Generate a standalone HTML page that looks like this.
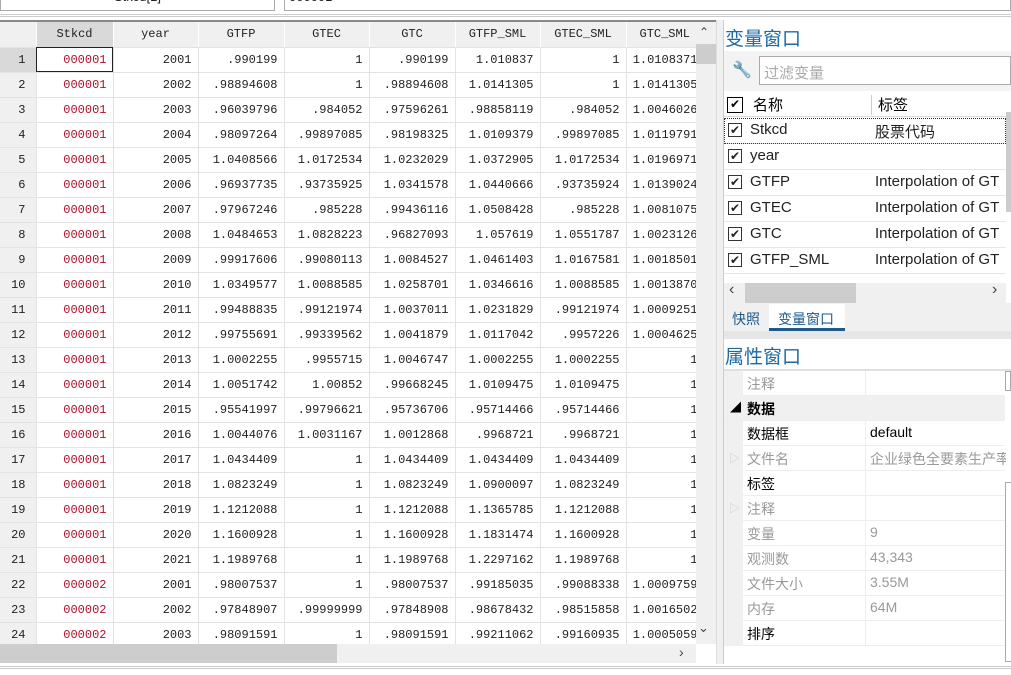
<!DOCTYPE html>
<html><head><meta charset="utf-8"><style>
*{margin:0;padding:0;box-sizing:border-box}
body{width:1011px;height:675px;overflow:hidden;background:#fff;position:relative;font-family:"Liberation Sans","Noto Sans CJK SC",sans-serif}
.a{position:absolute}
.mono{font-family:"Liberation Mono","DejaVu Sans Mono",monospace;font-size:12px;color:#222}
#grid{left:0;top:22px;width:696px;height:622px;overflow:hidden}
table{border-collapse:collapse;table-layout:fixed;width:704px}
td{height:25px;border-right:1px solid #e3e3e3;border-bottom:1px solid #e3e3e3;text-align:right;padding-right:6px;white-space:nowrap;overflow:hidden}
tr.h td{background:#f0f0f0;text-align:center;padding:0;border-right:1px solid #fff;border-bottom:1px solid #e3e3e3}
td.r{background:#f0f0f0;text-align:right;padding-right:10px;border-right:1px solid #e3e3e3}
td.s{color:#b0102a}
.vr{position:absolute;left:724px;width:282px;height:26px;border-bottom:1px solid #e6e6e6;font-size:15px;color:#222}
.cb{position:absolute;left:4px;top:5px;width:14px;height:14px;border:1px solid #333;font-size:12px;line-height:12px;text-align:center}
.pr{position:absolute;left:724px;width:281px;height:25px;border-bottom:1px solid #eee;font-size:14px}
.pr .m{position:absolute;left:0;top:0;width:19px;height:25px;background:#f0f0f0}
.pr .n{position:absolute;left:23px;top:3px}
.pr .v{position:absolute;left:146px;top:3px;white-space:nowrap;width:136px;overflow:hidden}
.pr .d{position:absolute;left:141px;top:0;width:1px;height:25px;background:#eee}
.g{color:#999}
</style></head><body>
<div class="a" style="left:0;top:-10px;width:275px;height:21px;border:1px solid #aaa;border-top:none;font-size:13px;text-align:center;color:#222;line-height:14px">Stkcd[1]</div>
<div class="a" style="left:284px;top:-10px;width:727px;height:21px;border:1px solid #aaa;border-top:none;font-size:13px;padding-left:4px;line-height:14px;color:#222">000001</div>
<div class="a" style="left:0;top:14px;width:1011px;height:3px;border-top:1px solid #ccc;border-bottom:1px solid #ccc"></div>
<div class="a" style="left:0;top:20px;width:716px;height:2px;background:#888"></div>
<div id="grid" class="a mono"><table>
<colgroup><col style="width:36px"><col style="width:77px"><col style="width:85px"><col style="width:86px"><col style="width:85px"><col style="width:86px"><col style="width:85px"><col style="width:86px"><col style="width:78px"></colgroup>
<tr class="h"><td></td><td style="background:#d9d9d9">Stkcd</td><td>year</td><td>GTFP</td><td>GTEC</td><td>GTC</td><td>GTFP_SML</td><td>GTEC_SML</td><td style="text-align:left;padding-left:13px">GTC_SML</td></tr>
<tr><td class="r" style="background:#d9d9d9">1</td><td class="s" style="outline:1px solid #222;outline-offset:-1px">000001</td><td>2001</td><td>.990199</td><td>1</td><td>.990199</td><td>1.010837</td><td>1</td><td>1.0108371</td></tr>
<tr><td class="r">2</td><td class="s">000001</td><td>2002</td><td>.98894608</td><td>1</td><td>.98894608</td><td>1.0141305</td><td>1</td><td>1.0141305</td></tr>
<tr><td class="r">3</td><td class="s">000001</td><td>2003</td><td>.96039796</td><td>.984052</td><td>.97596261</td><td>.98858119</td><td>.984052</td><td>1.0046026</td></tr>
<tr><td class="r">4</td><td class="s">000001</td><td>2004</td><td>.98097264</td><td>.99897085</td><td>.98198325</td><td>1.0109379</td><td>.99897085</td><td>1.0119791</td></tr>
<tr><td class="r">5</td><td class="s">000001</td><td>2005</td><td>1.0408566</td><td>1.0172534</td><td>1.0232029</td><td>1.0372905</td><td>1.0172534</td><td>1.0196971</td></tr>
<tr><td class="r">6</td><td class="s">000001</td><td>2006</td><td>.96937735</td><td>.93735925</td><td>1.0341578</td><td>1.0440666</td><td>.93735924</td><td>1.0139024</td></tr>
<tr><td class="r">7</td><td class="s">000001</td><td>2007</td><td>.97967246</td><td>.985228</td><td>.99436116</td><td>1.0508428</td><td>.985228</td><td>1.0081075</td></tr>
<tr><td class="r">8</td><td class="s">000001</td><td>2008</td><td>1.0484653</td><td>1.0828223</td><td>.96827093</td><td>1.057619</td><td>1.0551787</td><td>1.0023126</td></tr>
<tr><td class="r">9</td><td class="s">000001</td><td>2009</td><td>.99917606</td><td>.99080113</td><td>1.0084527</td><td>1.0461403</td><td>1.0167581</td><td>1.0018501</td></tr>
<tr><td class="r">10</td><td class="s">000001</td><td>2010</td><td>1.0349577</td><td>1.0088585</td><td>1.0258701</td><td>1.0346616</td><td>1.0088585</td><td>1.0013870</td></tr>
<tr><td class="r">11</td><td class="s">000001</td><td>2011</td><td>.99488835</td><td>.99121974</td><td>1.0037011</td><td>1.0231829</td><td>.99121974</td><td>1.0009251</td></tr>
<tr><td class="r">12</td><td class="s">000001</td><td>2012</td><td>.99755691</td><td>.99339562</td><td>1.0041879</td><td>1.0117042</td><td>.9957226</td><td>1.0004625</td></tr>
<tr><td class="r">13</td><td class="s">000001</td><td>2013</td><td>1.0002255</td><td>.9955715</td><td>1.0046747</td><td>1.0002255</td><td>1.0002255</td><td>1</td></tr>
<tr><td class="r">14</td><td class="s">000001</td><td>2014</td><td>1.0051742</td><td>1.00852</td><td>.99668245</td><td>1.0109475</td><td>1.0109475</td><td>1</td></tr>
<tr><td class="r">15</td><td class="s">000001</td><td>2015</td><td>.95541997</td><td>.99796621</td><td>.95736706</td><td>.95714466</td><td>.95714466</td><td>1</td></tr>
<tr><td class="r">16</td><td class="s">000001</td><td>2016</td><td>1.0044076</td><td>1.0031167</td><td>1.0012868</td><td>.9968721</td><td>.9968721</td><td>1</td></tr>
<tr><td class="r">17</td><td class="s">000001</td><td>2017</td><td>1.0434409</td><td>1</td><td>1.0434409</td><td>1.0434409</td><td>1.0434409</td><td>1</td></tr>
<tr><td class="r">18</td><td class="s">000001</td><td>2018</td><td>1.0823249</td><td>1</td><td>1.0823249</td><td>1.0900097</td><td>1.0823249</td><td>1</td></tr>
<tr><td class="r">19</td><td class="s">000001</td><td>2019</td><td>1.1212088</td><td>1</td><td>1.1212088</td><td>1.1365785</td><td>1.1212088</td><td>1</td></tr>
<tr><td class="r">20</td><td class="s">000001</td><td>2020</td><td>1.1600928</td><td>1</td><td>1.1600928</td><td>1.1831474</td><td>1.1600928</td><td>1</td></tr>
<tr><td class="r">21</td><td class="s">000001</td><td>2021</td><td>1.1989768</td><td>1</td><td>1.1989768</td><td>1.2297162</td><td>1.1989768</td><td>1</td></tr>
<tr><td class="r">22</td><td class="s">000002</td><td>2001</td><td>.98007537</td><td>1</td><td>.98007537</td><td>.99185035</td><td>.99088338</td><td>1.0009759</td></tr>
<tr><td class="r">23</td><td class="s">000002</td><td>2002</td><td>.97848907</td><td>.99999999</td><td>.97848908</td><td>.98678432</td><td>.98515858</td><td>1.0016502</td></tr>
<tr><td class="r">24</td><td class="s">000002</td><td>2003</td><td>.98091591</td><td>1</td><td>.98091591</td><td>.99211062</td><td>.99160935</td><td>1.0005059</td></tr>
</table></div>
<div class="a" style="left:696px;top:22px;width:20px;height:622px;background:#f0f0f0"></div>
<div class="a" style="left:696px;top:44px;width:20px;height:20px;background:#cdcdcd"></div>
<div class="a" style="left:699px;top:25px;font-size:12px;color:#444">&#8963;</div>
<div class="a" style="left:698px;top:620px;font-size:13px;color:#444">&#8964;</div>
<div class="a" style="left:0;top:644px;width:696px;height:19px;background:#f0f0f0"></div>
<div class="a" style="left:0;top:644px;width:337px;height:19px;background:#cdcdcd"></div>
<div class="a" style="left:679px;top:644px;font-size:14px;color:#444">&#8250;</div>
<div class="a" style="left:0;top:666px;width:1011px;height:3px;border-top:1px solid #ccc;border-bottom:1px solid #ccc"></div>
<div class="a" style="left:716px;top:20px;width:8px;height:644px;background:#f0f0f0;border-left:1px solid #ddd;border-right:1px solid #ccc"></div>
<div class="a" style="left:725px;top:24px;font-size:19px;color:#1d6aa5">变量窗口</div>
<div class="a" style="left:724px;top:51px;width:287px;height:40px;background:#f3f3f3"></div>
<div class="a" style="left:732px;top:60px;font-size:16px;color:#777">&#128295;</div>
<div class="a" style="left:759px;top:56px;width:252px;height:29px;border:1px solid #aaa;background:#fff;font-size:15px;color:#aaa;padding:5px 4px">过滤变量</div>
<div class="a" style="left:724px;top:92px;width:282px;height:25px;font-size:15px;border-bottom:1px solid #ddd">
<div class="cb" style="left:3px;top:5px;width:16px;height:16px;border-color:#000">✔</div>
<div class="a" style="left:29px;top:2px">名称</div><div class="a" style="left:147px;top:3px;width:1px;height:20px;background:#ccc"></div><div class="a" style="left:154px;top:2px">标签</div></div>
<div class="vr" style="top:118px;outline:1px dotted #333;outline-offset:-1px"><div class="cb">✔</div><span class="a" style="left:26px;top:3px">Stkcd</span><span class="a" style="left:151px;top:3px">股票代码</span></div>
<div class="vr" style="top:144px"><div class="cb">✔</div><span class="a" style="left:26px;top:3px">year</span></div>
<div class="vr" style="top:170px"><div class="cb">✔</div><span class="a" style="left:26px;top:3px">GTFP</span><span class="a" style="left:151px;top:3px;white-space:nowrap">Interpolation of GT</span></div>
<div class="vr" style="top:196px"><div class="cb">✔</div><span class="a" style="left:26px;top:3px">GTEC</span><span class="a" style="left:151px;top:3px;white-space:nowrap">Interpolation of GT</span></div>
<div class="vr" style="top:222px"><div class="cb">✔</div><span class="a" style="left:26px;top:3px">GTC</span><span class="a" style="left:151px;top:3px;white-space:nowrap">Interpolation of GT</span></div>
<div class="vr" style="top:248px"><div class="cb">✔</div><span class="a" style="left:26px;top:3px">GTFP_SML</span><span class="a" style="left:151px;top:3px;white-space:nowrap">Interpolation of GT</span></div>
<div class="a" style="left:1006px;top:112px;width:5px;height:100px;background:#ccc"></div>
<div class="a" style="left:724px;top:283px;width:282px;height:20px;background:#f0f0f0"></div>
<div class="a" style="left:745px;top:283px;width:111px;height:20px;background:#cdcdcd"></div>
<div class="a" style="left:729px;top:281px;font-size:16px;color:#444">&#8249;</div>
<div class="a" style="left:992px;top:281px;font-size:16px;color:#444">&#8250;</div>
<div class="a" style="left:724px;top:303px;width:287px;height:28px;background:#f0f0f0"></div>
<div class="a" style="left:732px;top:309px;font-size:14px;color:#1d5a8a">快照</div>
<div class="a" style="left:769px;top:304px;width:76px;height:27px;background:#fff;border-bottom:3px solid #1d5a8a;font-size:14px;color:#1d5a8a;padding:5px 9px">变量窗口</div>
<div class="a" style="left:724px;top:331px;width:287px;height:8px;background:#e6e6e6"></div>
<div class="a" style="left:725px;top:342px;font-size:19px;color:#1d6aa5">属性窗口</div>
<div class="a" style="left:724px;top:369px;width:287px;height:2px;background:#e0e0e0"></div>
<div class="pr" style="top:371px"><div class="m"></div><span class="n g">注释</span><div class="d"></div></div>
<div class="pr" style="top:396px;background:#f0f0f0"><span class="a" style="left:6px;top:3px;font-size:11px">◢</span><span class="n" style="font-weight:bold">数据</span></div>
<div class="pr" style="top:421px"><div class="m"></div><span class="n">数据框</span><div class="d"></div><span class="v">default</span></div>
<div class="pr" style="top:446px"><div class="m"></div><span class="a" style="left:5px;top:4px;color:#ccc;font-size:11px">▷</span><span class="n g">文件名</span><div class="d"></div><span class="v g">企业绿色全要素生产率</span></div>
<div class="pr" style="top:471px"><div class="m"></div><span class="n">标签</span><div class="d"></div></div>
<div class="pr" style="top:496px"><div class="m"></div><span class="a" style="left:5px;top:4px;color:#ccc;font-size:11px">▷</span><span class="n g">注释</span><div class="d"></div></div>
<div class="pr" style="top:521px"><div class="m"></div><span class="n g">变量</span><div class="d"></div><span class="v g">9</span></div>
<div class="pr" style="top:546px"><div class="m"></div><span class="n g">观测数</span><div class="d"></div><span class="v g">43,343</span></div>
<div class="pr" style="top:571px"><div class="m"></div><span class="n g">文件大小</span><div class="d"></div><span class="v g">3.55M</span></div>
<div class="pr" style="top:596px"><div class="m"></div><span class="n g">内存</span><div class="d"></div><span class="v g">64M</span></div>
<div class="pr" style="top:621px"><div class="m"></div><span class="n">排序</span><div class="d"></div></div>
<div class="a" style="left:1005px;top:371px;width:6px;height:20px;border:1px solid #aaa;background:#fff"></div>
<div class="a" style="left:1005px;top:482px;width:6px;height:180px;border:1px solid #aaa;border-right:none;background:#fff"></div>
</body></html>
